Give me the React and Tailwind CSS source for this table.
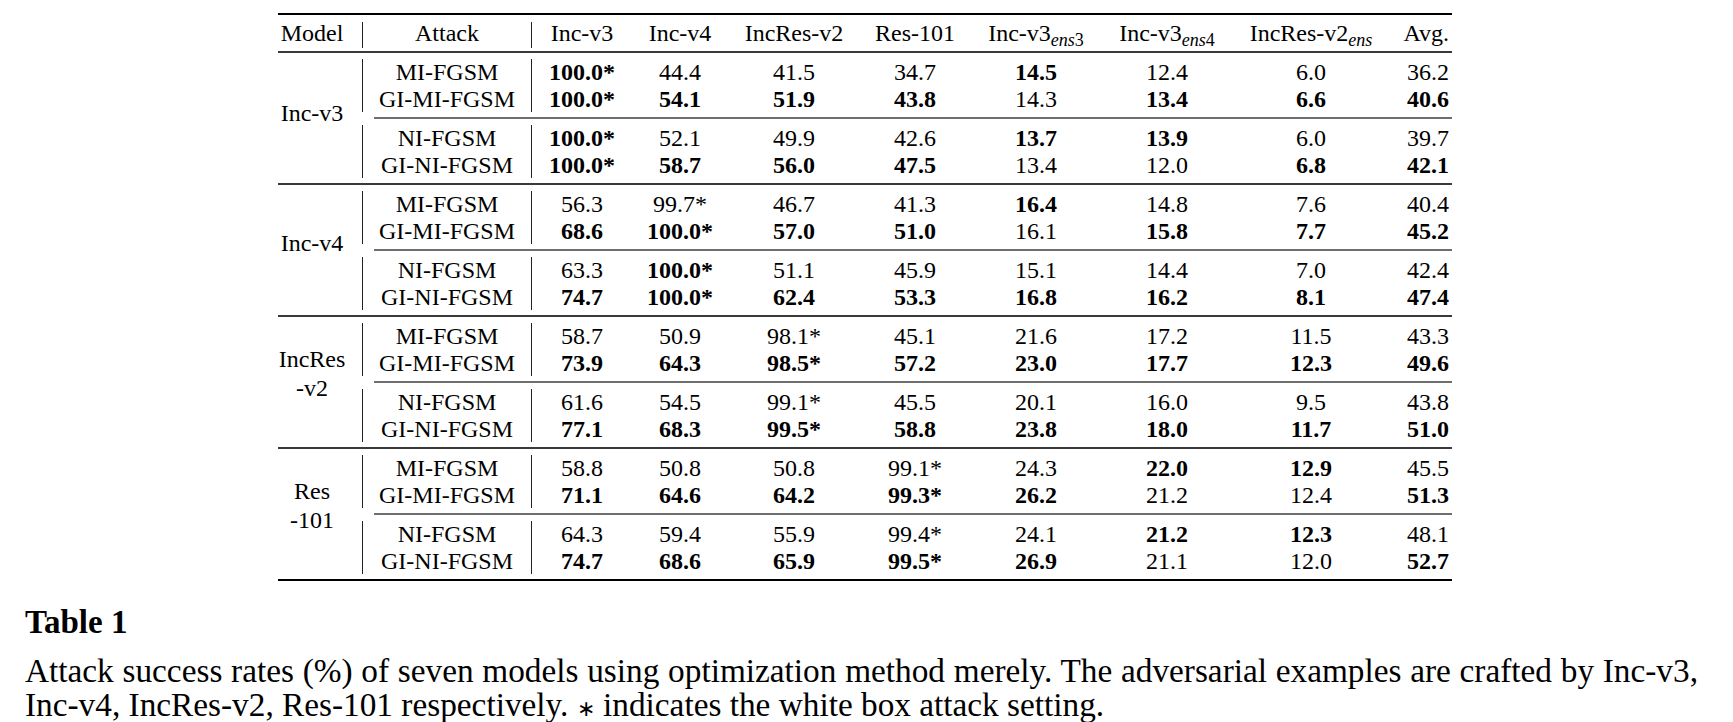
import React from "react";

// "!" in front of a value = bold cell
const groups = [
  {
    model: ["Inc-v3"],
    labelPad: "pb-[9px]",
    rows: [
      ["MI-FGSM", "!100.0*", "44.4", "41.5", "34.7", "!14.5", "12.4", "6.0", "36.2"],
      ["GI-MI-FGSM", "!100.0*", "!54.1", "!51.9", "!43.8", "14.3", "!13.4", "!6.6", "!40.6"],
      ["NI-FGSM", "!100.0*", "52.1", "49.9", "42.6", "!13.7", "!13.9", "6.0", "39.7"],
      ["GI-NI-FGSM", "!100.0*", "!58.7", "!56.0", "!47.5", "13.4", "12.0", "!6.8", "!42.1"],
    ],
  },
  {
    model: ["Inc-v4"],
    labelPad: "pb-[13px]",
    rows: [
      ["MI-FGSM", "56.3", "99.7*", "46.7", "41.3", "!16.4", "14.8", "7.6", "40.4"],
      ["GI-MI-FGSM", "!68.6", "!100.0*", "!57.0", "!51.0", "16.1", "!15.8", "!7.7", "!45.2"],
      ["NI-FGSM", "63.3", "!100.0*", "51.1", "45.9", "15.1", "14.4", "7.0", "42.4"],
      ["GI-NI-FGSM", "!74.7", "!100.0*", "!62.4", "!53.3", "!16.8", "!16.2", "!8.1", "!47.4"],
    ],
  },
  {
    model: ["IncRes", "-v2"],
    labelPad: "pb-[16px]",
    rows: [
      ["MI-FGSM", "58.7", "50.9", "98.1*", "45.1", "21.6", "17.2", "11.5", "43.3"],
      ["GI-MI-FGSM", "!73.9", "!64.3", "!98.5*", "!57.2", "!23.0", "!17.7", "!12.3", "!49.6"],
      ["NI-FGSM", "61.6", "54.5", "99.1*", "45.5", "20.1", "16.0", "9.5", "43.8"],
      ["GI-NI-FGSM", "!77.1", "!68.3", "!99.5*", "!58.8", "!23.8", "!18.0", "!11.7", "!51.0"],
    ],
  },
  {
    model: ["Res", "-101"],
    labelPad: "pb-[16px]",
    rows: [
      ["MI-FGSM", "58.8", "50.8", "50.8", "99.1*", "24.3", "!22.0", "!12.9", "45.5"],
      ["GI-MI-FGSM", "!71.1", "!64.6", "!64.2", "!99.3*", "!26.2", "21.2", "12.4", "!51.3"],
      ["NI-FGSM", "64.3", "59.4", "55.9", "99.4*", "24.1", "!21.2", "!12.3", "48.1"],
      ["GI-NI-FGSM", "!74.7", "!68.6", "!65.9", "!99.5*", "!26.9", "21.1", "12.0", "!52.7"],
    ],
  },
];

const dataCols = "grid grid-cols-[100px_96px_132px_110px_132px_130px_158px_62px]";

function Cell({ value, last }) {
  const bold = value.startsWith("!");
  const text = bold ? value.slice(1) : value;
  return (
    <div className={`${last ? "text-right pr-[3px]" : "text-center"} ${bold ? "font-bold" : ""}`}>
      {text}
    </div>
  );
}

function Row({ row }) {
  const [attack, ...vals] = row;
  return (
    <div className="flex h-[26.5px] leading-[26.5px]">
      <div className="w-[170px] border-x border-[#222] text-center">{attack}</div>
      <div className={dataCols}>
        {vals.map((v, i) => (
          <Cell key={i} value={v} last={i === vals.length - 1} />
        ))}
      </div>
    </div>
  );
}

function Sub({ rows }) {
  return (
    <div className="pt-[6px] pb-[5px]">
      {rows.map((r) => (
        <Row key={r[0]} row={r} />
      ))}
    </div>
  );
}

function Ens({ base, sub }) {
  return (
    <span>
      {base}
      <span className="text-[18px] leading-none align-[-5px]">
        <i>ens</i>
        {sub}
      </span>
    </span>
  );
}

export default function App() {
  return (
    <div className="min-h-screen bg-white px-[25px] text-black font-['Liberation_Serif','Times_New_Roman',serif]">
      <div className="flex justify-center pr-[3px] pt-[13px]">
        <div className="w-[1174px] text-[24px]">
          <div className="h-[2px] bg-black" />

          {/* header */}
          <div className="flex pt-[7px] pb-[3px]">
            <div className="h-[26px] w-[84px] pr-[16px] text-center leading-[22px]">Model</div>
            <div className="h-[26px] w-[170px] border-x border-[#222] text-center leading-[22px]">Attack</div>
            <div className={`${dataCols} h-[26px] leading-[22px]`}>
              <div className="text-center">Inc-v3</div>
              <div className="text-center">Inc-v4</div>
              <div className="text-center">IncRes-v2</div>
              <div className="text-center">Res-101</div>
              <div className="text-center">
                <Ens base="Inc-v3" sub="3" />
              </div>
              <div className="text-center">
                <Ens base="Inc-v3" sub="4" />
              </div>
              <div className="text-center">
                <Ens base="IncRes-v2" sub="" />
              </div>
              <div className="text-right pr-[3px]">Avg.</div>
            </div>
          </div>
          <div className="h-[2px] bg-[#3a3a3a]" />

          {groups.map((g, gi) => (
            <div key={g.model.join("")}>
              <div className="flex">
                <div
                  className={`flex w-[84px] flex-col items-center justify-center pr-[16px] leading-[29px] ${g.labelPad}`}
                >
                  {g.model.map((l) => (
                    <span key={l}>{l}</span>
                  ))}
                </div>
                <div className="flex flex-1 flex-col">
                  <Sub rows={g.rows.slice(0, 2)} />
                  <div className="ml-[12px] h-[2px] bg-[#6e6e6e]" />
                  <Sub rows={g.rows.slice(2, 4)} />
                </div>
              </div>
              {gi < groups.length - 1 ? (
                <div className="h-[2px] bg-[#3a3a3a]" />
              ) : (
                <div className="h-[2px] bg-black" />
              )}
            </div>
          ))}
        </div>
      </div>

      {/* caption */}
      <div className="w-[1673px] pt-[24px]">
        <div className="text-[33px] font-bold leading-[34px]">Table 1</div>
        <p className="mt-[15px] text-justify text-[33.3px] leading-[34px]">
          Attack success rates (%) of seven models using optimization method merely. The adversarial
          examples are crafted by Inc-v3, Inc-v4, IncRes-v2, Res-101 respectively.{" "}
          <span className="text-[22px] leading-none">∗</span> indicates the white box attack setting.
        </p>
      </div>
    </div>
  );
}
